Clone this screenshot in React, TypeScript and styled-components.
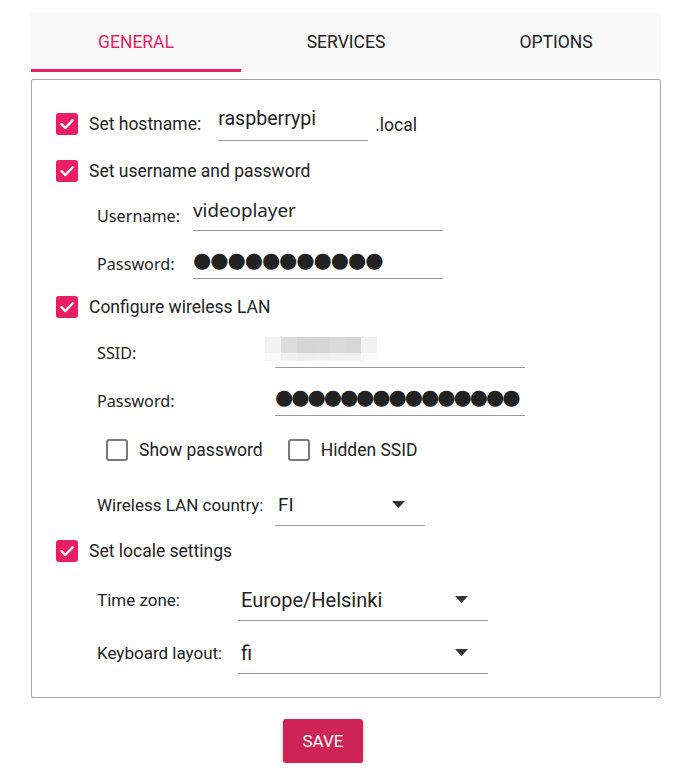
import React from 'react';
import styled, { createGlobalStyle } from 'styled-components';

const GlobalStyle = createGlobalStyle`
  body {
    margin: 0;
    background: #ffffff;
    font-family: Roboto, "Noto Sans", sans-serif;
    color: #222;
  }
`;

const PINK = '#e91e63';

const Check = ({ checked }: { checked?: boolean }) => (
  <Box checked={checked}>
    {checked && (
      <svg width="16" height="16" viewBox="0 0 16 16">
        <path d="M2.5 8.2 L6.3 12 L13.6 4.3" stroke="#fff" strokeWidth="2.4" fill="none" strokeLinecap="round" strokeLinejoin="round" />
      </svg>
    )}
  </Box>
);

const Arrow = () => (
  <svg width="13" height="7" viewBox="0 0 13 7">
    <path d="M0 0 L13 0 L6.5 7 Z" fill="#333" />
  </svg>
);

const blurCells = [
  ['#f2f2f2', '#dcdcdc', '#d5d5d5', '#d6d6d6', '#d9d9d9', '#d7d7d7', '#f1f1f1'],
  ['#f9f9f9', '#f0f0f0', '#eeeeee', '#efefef', '#f0f0f0', '#f0f0f0', '#fafafa'],
];

const App = () => {
  return (
    <Page>
      <GlobalStyle />
      <TabBar>
        <Tab active>General</Tab>
        <Tab>Services</Tab>
        <Tab>Options</Tab>
      </TabBar>
      <Panel>
        <Row h={48}>
          <Check checked />
          <CheckLabel>Set hostname:</CheckLabel>
          <Field w={150} h={32} ml={17} pb={11}>
            <FieldText size={19.6}>raspberrypi</FieldText>
          </Field>
          <Suffix>.local</Suffix>
        </Row>
        <Row h={46}>
          <Check checked />
          <CheckLabel>Set username and password</CheckLabel>
        </Row>
        <SubRow h={44}>
          <SubLabel w={96} noto>Username:</SubLabel>
          <Field w={250} h={30} pb={10}>
            <FieldText size={18.8} noto>videoplayer</FieldText>
          </Field>
        </SubRow>
        <SubRow h={52}>
          <SubLabel w={96} noto>Password:</SubLabel>
          <Field w={250} h={30} pb={7}>
            <Dots spacing={-1.1}>●●●●●●●●●●●</Dots>
          </Field>
        </SubRow>
        <Row h={34}>
          <Check checked />
          <CheckLabel>Configure wireless LAN</CheckLabel>
        </Row>
        <SubRow h={58}>
          <SubLabel w={178} noto>SSID:</SubLabel>
          <Field w={250} h={30} pb={0}>
            <Blur>
              {blurCells.map((row, i) => (
                <BlurRow key={i} tall={i === 0}>
                  {row.map((c, j) => (
                    <BlurCell key={j} style={{ background: c }} />
                  ))}
                </BlurRow>
              ))}
            </Blur>
          </Field>
        </SubRow>
        <SubRow h={38}>
          <SubLabel w={178} noto>Password:</SubLabel>
          <Field w={250} h={30} pb={7}>
            <Dots spacing={-2.1}>●●●●●●●●●●●●●●●</Dots>
          </Field>
        </SubRow>
        <OptionRow>
          <Option>
            <Check />
            <OptionLabel>Show password</OptionLabel>
          </Option>
          <Option>
            <Check />
            <OptionLabel>Hidden SSID</OptionLabel>
          </Option>
        </OptionRow>
        <SubRow h={50}>
          <SubLabel w={178}>Wireless LAN country:</SubLabel>
          <Combo w={150}>
            <ComboText size={19}>FI</ComboText>
            <Arrow />
          </Combo>
        </SubRow>
        <Row h={42}>
          <Check checked />
          <CheckLabel>Set locale settings</CheckLabel>
        </Row>
        <SubRow h={56}>
          <SubLabel w={141}>Time zone:</SubLabel>
          <Combo w={250}>
            <ComboText size={20}>Europe/Helsinki</ComboText>
            <Arrow />
          </Combo>
        </SubRow>
        <SubRow h={50}>
          <SubLabel w={141}>Keyboard layout:</SubLabel>
          <Combo w={250}>
            <ComboText size={20}>fi</ComboText>
            <Arrow />
          </Combo>
        </SubRow>
      </Panel>
      <Footer>
        <SaveButton>Save</SaveButton>
      </Footer>
    </Page>
  );
};

export default App;

const Page = styled.div`
  width: 630px;
  padding: 13px 0 0 31px;
`;

const TabBar = styled.div`
  display: flex;
  height: 59px;
  background: #f8f8f8;
`;

const Tab = styled.div<{ active?: boolean }>`
  flex: 1;
  display: flex;
  align-items: center;
  justify-content: center;
  padding-top: 1px;
  text-transform: uppercase;
  font-size: 17.5px;
  color: ${(p) => (p.active ? PINK : '#222')};
  box-sizing: border-box;
  border-bottom: 3px solid ${(p) => (p.active ? PINK : 'transparent')};
`;

const Panel = styled.div`
  margin-top: 7px;
  border: 1px solid #a3a3a3;
  border-radius: 2px;
  padding: 20px 0 19px 24px;
  display: flex;
  flex-direction: column;
`;

const Row = styled.div<{ h: number }>`
  display: flex;
  align-items: center;
  height: ${(p) => p.h}px;
`;

const SubRow = styled(Row)`
  padding-left: 41px;
`;

const Box = styled.div<{ checked?: boolean }>`
  width: 22px;
  height: 22px;
  box-sizing: border-box;
  border-radius: 3px;
  display: flex;
  align-items: center;
  justify-content: center;
  flex-shrink: 0;
  background: ${(p) => (p.checked ? PINK : '#fff')};
  border: ${(p) => (p.checked ? 'none' : '2px solid #7a7a7a')};
`;

const CheckLabel = styled.span`
  margin-left: 11px;
  font-size: 17.5px;
  color: #222;
`;

const Suffix = styled.span`
  margin-left: 7px;
  margin-top: 2px;
  font-size: 17.5px;
`;

const SubLabel = styled.span<{ w: number; noto?: boolean }>`
  width: ${(p) => p.w}px;
  flex-shrink: 0;
  font-size: ${(p) => (p.noto ? 16.2 : 17)}px;
  font-family: ${(p) => (p.noto ? '"Noto Sans", sans-serif' : 'Roboto, sans-serif')};
  color: #222;
`;

const Field = styled.div<{ w: number; h: number; ml?: number; pb: number }>`
  width: ${(p) => p.w}px;
  height: ${(p) => p.h}px;
  margin-left: ${(p) => p.ml || 0}px;
  box-sizing: border-box;
  border-bottom: 1px solid #9a9a9a;
  display: flex;
  align-items: flex-end;
  padding-bottom: ${(p) => p.pb}px;
  transform: translateY(${(p) => p.h / 2 - 15}px);
`;

const FieldText = styled.span<{ size: number; noto?: boolean }>`
  font-size: ${(p) => p.size}px;
  line-height: 1;
  font-family: ${(p) => (p.noto ? '"Noto Sans", sans-serif' : 'Roboto, sans-serif')};
  color: #222;
`;

const Dots = styled.span<{ spacing: number }>`
  font-family: "DejaVu Sans", sans-serif;
  font-size: 21px;
  line-height: 1;
  letter-spacing: ${(p) => p.spacing}px;
  color: #222;
  white-space: nowrap;
`;

const Blur = styled.div`
  margin-left: -10px;
  margin-bottom: 6px;
  display: flex;
  flex-direction: column;
`;

const BlurRow = styled.div<{ tall?: boolean }>`
  display: flex;
  height: ${(p) => (p.tall ? 16 : 8)}px;
`;

const BlurCell = styled.div`
  width: 16px;
  height: 100%;
`;

const OptionRow = styled.div`
  display: flex;
  align-items: center;
  height: 60px;
  padding-left: 50px;
  gap: 25px;
`;

const Option = styled.div`
  display: flex;
  align-items: center;
`;

const OptionLabel = styled.span`
  margin-left: 11px;
  font-size: 17.5px;
  color: #222;
`;

const Combo = styled.div<{ w: number }>`
  width: ${(p) => p.w}px;
  height: 42px;
  box-sizing: border-box;
  border-bottom: 1px solid #9a9a9a;
  display: flex;
  align-items: center;
  justify-content: space-between;
  padding: 0 20px 0 3px;
`;

const ComboText = styled.span<{ size: number }>`
  font-size: ${(p) => p.size}px;
  color: #222;
`;

const Footer = styled.div`
  display: flex;
  padding: 21px 0 0 252px;
`;

const SaveButton = styled.button`
  width: 80px;
  height: 44px;
  border: none;
  border-radius: 3px;
  background: #cd2355;
  color: #fff;
  font-family: Roboto, sans-serif;
  font-size: 17px;
  text-transform: uppercase;
  box-shadow: 0 2px 4px rgba(0, 0, 0, 0.25);
`;
